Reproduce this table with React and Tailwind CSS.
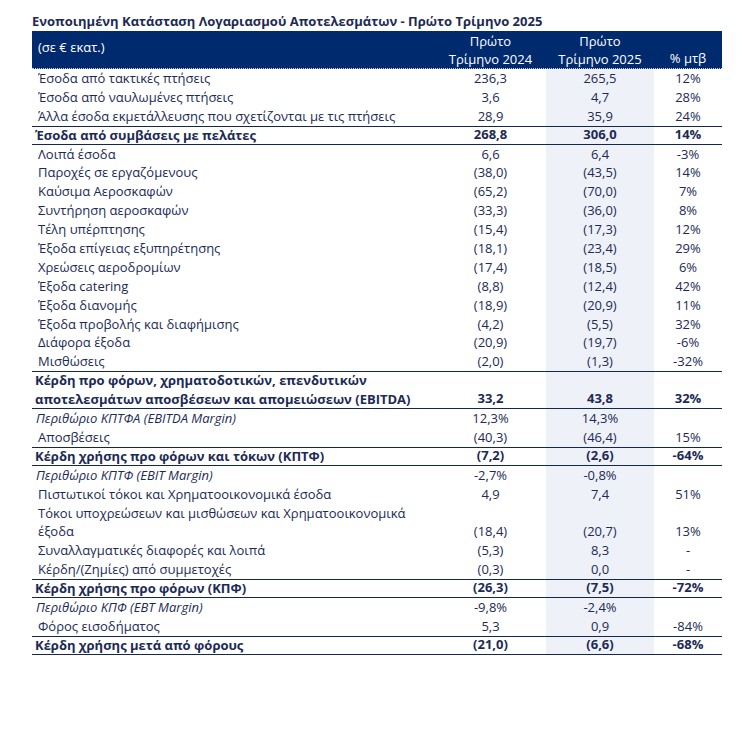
import React from 'react';

const rows = [
  { label: 'Έσοδα από τακτικές πτήσεις', a: '236,3', b: '265,5', c: '12%' },
  { label: 'Έσοδα από ναυλωμένες πτήσεις', a: '3,6', b: '4,7', c: '28%' },
  { label: 'Άλλα έσοδα εκμετάλλευσης που σχετίζονται με τις πτήσεις', a: '28,9', b: '35,9', c: '24%' },
  { label: 'Έσοδα από συμβάσεις με πελάτες', a: '268,8', b: '306,0', c: '14%', type: 'bold' },
  { label: 'Λοιπά έσοδα', a: '6,6', b: '6,4', c: '-3%' },
  { label: 'Παροχές σε εργαζόμενους', a: '(38,0)', b: '(43,5)', c: '14%' },
  { label: 'Καύσιμα Αεροσκαφών', a: '(65,2)', b: '(70,0)', c: '7%' },
  { label: 'Συντήρηση αεροσκαφών', a: '(33,3)', b: '(36,0)', c: '8%' },
  { label: 'Τέλη υπέρπτησης', a: '(15,4)', b: '(17,3)', c: '12%' },
  { label: 'Έξοδα επίγειας εξυπηρέτησης', a: '(18,1)', b: '(23,4)', c: '29%' },
  { label: 'Χρεώσεις αεροδρομίων', a: '(17,4)', b: '(18,5)', c: '6%' },
  { label: 'Έξοδα catering', a: '(8,8)', b: '(12,4)', c: '42%' },
  { label: 'Έξοδα διανομής', a: '(18,9)', b: '(20,9)', c: '11%' },
  { label: 'Έξοδα προβολής και διαφήμισης', a: '(4,2)', b: '(5,5)', c: '32%' },
  { label: 'Διάφορα έξοδα', a: '(20,9)', b: '(19,7)', c: '-6%' },
  { label: 'Μισθώσεις', a: '(2,0)', b: '(1,3)', c: '-32%' },
  {
    label: ['Κέρδη προ φόρων, χρηματοδοτικών, επενδυτικών', 'αποτελεσμάτων αποσβέσεων και απομειώσεων (EBITDA)'],
    a: '33,2', b: '43,8', c: '32%', type: 'bold',
  },
  { label: 'Περιθώριο ΚΠΤΦΑ (EBITDA Margin)', a: '12,3%', b: '14,3%', c: '', type: 'italic' },
  { label: 'Αποσβέσεις', a: '(40,3)', b: '(46,4)', c: '15%' },
  { label: 'Κέρδη χρήσης προ φόρων και τόκων (ΚΠΤΦ)', a: '(7,2)', b: '(2,6)', c: '-64%', type: 'bold' },
  { label: 'Περιθώριο ΚΠΤΦ (EBIT Margin)', a: '-2,7%', b: '-0,8%', c: '', type: 'italic' },
  { label: 'Πιστωτικοί τόκοι και Χρηματοοικονομικά έσοδα', a: '4,9', b: '7,4', c: '51%' },
  {
    label: ['Τόκοι υποχρεώσεων και μισθώσεων και Χρηματοοικονομικά', 'έξοδα'],
    a: '(18,4)', b: '(20,7)', c: '13%',
  },
  { label: 'Συναλλαγματικές διαφορές και λοιπά', a: '(5,3)', b: '8,3', c: '-' },
  { label: 'Κέρδη/(Ζημίες) από συμμετοχές', a: '(0,3)', b: '0,0', c: '-' },
  { label: 'Κέρδη χρήσης προ φόρων (ΚΠΦ)', a: '(26,3)', b: '(7,5)', c: '-72%', type: 'bold' },
  { label: 'Περιθώριο ΚΠΦ (EBT Margin)', a: '-9,8%', b: '-2,4%', c: '', type: 'italic' },
  { label: 'Φόρος εισοδήματος', a: '5,3', b: '0,9', c: '-84%' },
  { label: 'Κέρδη χρήσης μετά από φόρους', a: '(21,0)', b: '(6,6)', c: '-68%', type: 'bold' },
];

function Row({ row }) {
  const lines = Array.isArray(row.label) ? row.label : [row.label];
  const bold = row.type === 'bold';
  const italic = row.type === 'italic';
  const h = lines.length > 1 ? 'h-[37.8px]' : 'h-[18.9px]';
  return (
    <div
      className={`flex ${h} ${bold ? 'font-bold border-y-[1.5px] border-[#14284b]' : ''}`}
    >
      <div
        className={`w-[403px] flex flex-col justify-center leading-[18.9px] ${
          bold ? 'pl-[3px]' : italic ? 'pl-[4px] italic' : 'pl-[6px]'
        }`}
      >
        {lines.map((l, i) => (
          <div key={i} className="whitespace-nowrap">{l}</div>
        ))}
      </div>
      <div className="w-[111px] flex items-end justify-center leading-[18.9px]">{row.a}</div>
      <div className="w-[108px] flex items-end justify-center leading-[18.9px] bg-[#eef1f8]">{row.b}</div>
      <div className="w-[68px] flex items-end justify-center leading-[18.9px]">{row.c}</div>
    </div>
  );
}

export default function App() {
  return (
    <div
      className="w-[755px] h-[731px] bg-white text-[#1c2a55] text-[13px] pt-[12px] pl-[32px]"
      style={{ fontFamily: '"Open Sans", "Noto Sans", sans-serif' }}
    >
      <div className="w-[690px]">
        <div className="font-bold text-[13px] leading-[19px] h-[19px]">
          Ενοποιημένη Κατάσταση Λογαριασμού Αποτελεσμάτων - Πρώτο Τρίμηνο 2025
        </div>
        <div className="flex h-[38px] bg-[#002a6e] text-white border-b border-dotted border-[#c8d0e6]">
          <div className="w-[403px] pl-[6px] pt-[7px]">(σε € εκατ.)</div>
          <div className="w-[111px] flex flex-col items-center justify-center leading-[18px]">
            <span>Πρώτο</span>
            <span>Τρίμηνο 2024</span>
          </div>
          <div className="w-[108px] flex flex-col items-center justify-center leading-[18px]">
            <span>Πρώτο</span>
            <span>Τρίμηνο 2025</span>
          </div>
          <div className="w-[68px] flex flex-col items-center justify-end pb-[1px] leading-[18px]">
            <span>% μτβ</span>
          </div>
        </div>
        {rows.map((row, i) => (
          <Row key={i} row={row} />
        ))}
      </div>
    </div>
  );
}
